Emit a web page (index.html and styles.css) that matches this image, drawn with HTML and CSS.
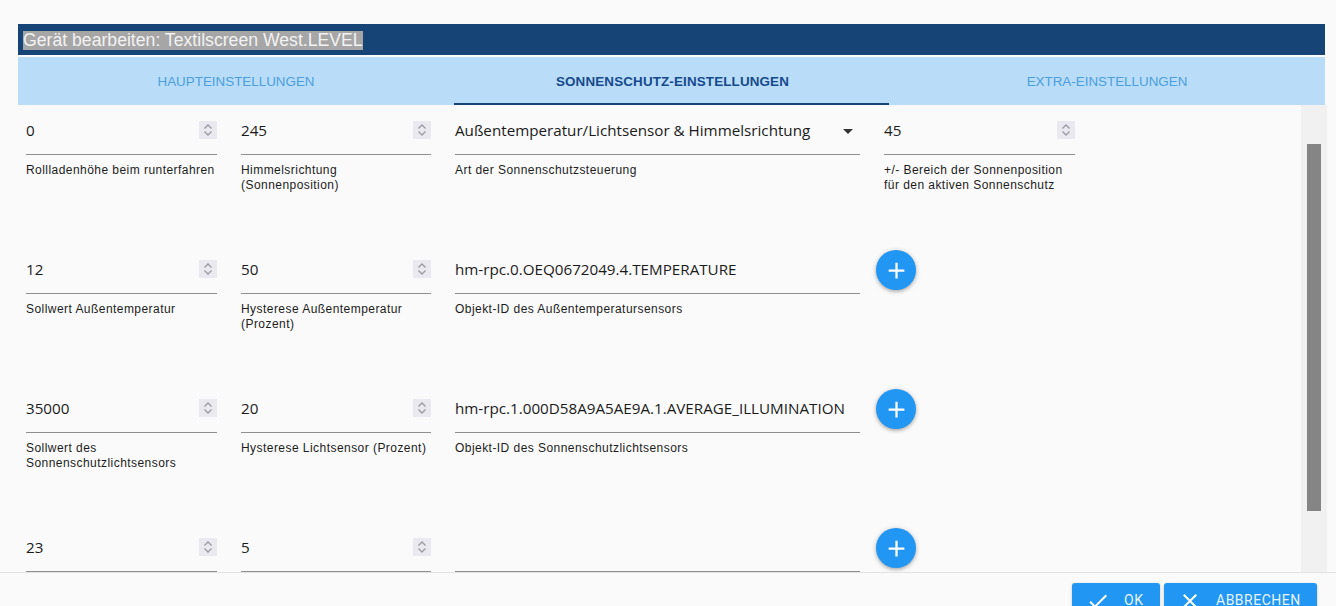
FILE: index.html
```html
<!DOCTYPE html>
<html lang="de">
<head>
<meta charset="utf-8">
<title>Gerät bearbeiten</title>
<link rel="stylesheet" href="styles.css">
</head>
<body>
<svg class="defs" width="0" height="0" aria-hidden="true">
  <symbol id="spin" viewBox="0 0 18 18">
    <rect width="18" height="18" fill="#e9e9ef"/>
    <path d="M5.500 7.500 9 4l3.500 3.500M5.500 10.500 9 14l3.500-3.500" fill="none" stroke="#9a9aa2" stroke-width="1.300"/>
  </symbol>
  <symbol id="plus" viewBox="0 0 24 24">
    <path d="M19 13h-6v6h-2v-6H5v-2h6V5h2v6h6v2z" fill="#fff"/>
  </symbol>
</svg>
<main class="dialog">
  <h1 class="title"><span class="title-sel">Gerät bearbeiten: Textilscreen West.LEVEL</span></h1>
  <nav class="tabs">
    <div class="tab">HAUPTEINSTELLUNGEN</div>
    <div class="tab tab-active">SONNENSCHUTZ-EINSTELLUNGEN</div>
    <div class="tab">EXTRA-EINSTELLUNGEN</div>
  </nav>
  <div class="content">
    <div class="form">
      <div class="row">
        <div class="field">
          <div class="input"><span class="value">0</span><svg class="spin"><use href="#spin"/></svg></div>
          <div class="label">Rollladenhöhe beim runterfahren</div>
        </div>
        <div class="field">
          <div class="input"><span class="value">245</span><svg class="spin"><use href="#spin"/></svg></div>
          <div class="label">Himmelsrichtung (Sonnenposition)</div>
        </div>
        <div class="field">
          <div class="input"><span class="value">Außentemperatur/Lichtsensor &amp; Himmelsrichtung</span><span class="caret"></span></div>
          <div class="label">Art der Sonnenschutzsteuerung</div>
        </div>
        <div class="field">
          <div class="input"><span class="value">45</span><svg class="spin"><use href="#spin"/></svg></div>
          <div class="label">+/- Bereich der Sonnenposition für den aktiven Sonnenschutz</div>
        </div>
      </div>
      <div class="row">
        <div class="field">
          <div class="input"><span class="value">12</span><svg class="spin"><use href="#spin"/></svg></div>
          <div class="label">Sollwert Außentemperatur</div>
        </div>
        <div class="field">
          <div class="input"><span class="value">50</span><svg class="spin"><use href="#spin"/></svg></div>
          <div class="label">Hysterese Außentemperatur (Prozent)</div>
        </div>
        <div class="field">
          <div class="input"><span class="value">hm-rpc.0.OEQ0672049.4.TEMPERATURE</span></div>
          <div class="label">Objekt-ID des Außentemperatursensors</div>
        </div>
        <div class="fab"><svg class="fab-icon"><use href="#plus"/></svg></div>
      </div>
      <div class="row">
        <div class="field">
          <div class="input"><span class="value">35000</span><svg class="spin"><use href="#spin"/></svg></div>
          <div class="label">Sollwert des Sonnenschutzlichtsensors</div>
        </div>
        <div class="field">
          <div class="input"><span class="value">20</span><svg class="spin"><use href="#spin"/></svg></div>
          <div class="label">Hysterese Lichtsensor (Prozent)</div>
        </div>
        <div class="field">
          <div class="input"><span class="value">hm-rpc.1.000D58A9A5AE9A.1.AVERAGE_ILLUMINATION</span></div>
          <div class="label">Objekt-ID des Sonnenschutzlichtsensors</div>
        </div>
        <div class="fab"><svg class="fab-icon"><use href="#plus"/></svg></div>
      </div>
      <div class="row">
        <div class="field">
          <div class="input"><span class="value">23</span><svg class="spin"><use href="#spin"/></svg></div>
        </div>
        <div class="field">
          <div class="input"><span class="value">5</span><svg class="spin"><use href="#spin"/></svg></div>
        </div>
        <div class="field">
          <div class="input"></div>
        </div>
        <div class="fab"><svg class="fab-icon"><use href="#plus"/></svg></div>
      </div>
    </div>
    <div class="scrollbar"><div class="thumb"></div></div>
  </div>
  <footer class="footer">
    <div class="btn">
      <svg class="btn-icon" viewBox="0 0 24 24"><path d="M9 16.170 4.830 12l-1.420 1.410L9 19 21 7l-1.410-1.410z" fill="#fff"/></svg>
      <span class="btn-text">OK</span>
    </div>
    <div class="btn">
      <svg class="btn-icon" viewBox="0 0 24 24"><path d="M19 6.410 17.590 5 12 10.590 6.410 5 5 6.410 10.590 12 5 17.590 6.410 19 12 13.410 17.590 19 19 17.590 13.410 12z" fill="#fff"/></svg>
      <span class="btn-text">ABBRECHEN</span>
    </div>
  </footer>
</main>
</body>
</html>
```

FILE: styles.css
```css
* { box-sizing: border-box; }
html, body { margin: 0; height: 100%; overflow: hidden; }
body { background: #fafafa; color: #111; font-family: "Liberation Sans", Arial, sans-serif; }
.defs { display: block; height: 0; }
.dialog { height: 606px; display: flex; flex-direction: column; padding-top: 24px; overflow: hidden; }

.title { margin: 0 11px 0 18px; height: 31px; background: #174476; padding: 7px 0 0 5px; font-size: 17.65px; line-height: 19px; font-weight: 400; color: #fff; flex: none; }
.title-sel { display: inline-block; background: #a6a6a6; color: #f2f2f2; height: 19px; }

.tabs { flex: none; margin: 2px 11px 0 18px; height: 48px; background: #b9dcf9; display: grid; grid-template-columns: 436px 435px 436px; }
.tab { display: flex; align-items: center; justify-content: center; font-size: 13.4px; color: #4b9fdc; }
.tab-active { color: #174a8c; font-weight: 700; border-bottom: 2px solid #174476; padding-top: 2px; padding-left: 2px; letter-spacing: 0.15px; }

.content { flex: none; height: 467px; margin-left: 18px; margin-right: 9px; display: flex; overflow: hidden; }
.form { flex: 1; padding-left: 8px; }
.row { height: 139px; display: grid; grid-template-columns: 191px 190px 405px 191px; column-gap: 24px; align-items: start; }
.input { height: 50px; display: flex; align-items: flex-start; justify-content: space-between; border-bottom: 1px solid #8f8f8f; font-family: "Open Sans", "Noto Sans", sans-serif; font-size: 15.2px; line-height: 22px; color: #1a1a1a; padding-top: 14px; white-space: nowrap; }
.spin { width: 18px; height: 18px; margin-top: 2px; flex: none; }
.caret { width: 0; height: 0; border-left: 5px solid transparent; border-right: 5px solid transparent; border-top: 5px solid #333; margin: 10px 7px 0 0; }
.label { margin-top: 8px; font-size: 12px; line-height: 15px; color: #1c1c1c; letter-spacing: 0.45px; }
.fab { width: 40px; height: 40px; margin: 6px 0 0 -8px; border-radius: 50%; background: #2196f3; box-shadow: 0 1px 5px rgba(0,0,0,.25), 0 2px 3px rgba(0,0,0,.12); display: flex; align-items: center; justify-content: center; }
.fab-icon { width: 27px; height: 27px; }

.scrollbar { flex: none; width: 26px; background: #f1f1f1; padding: 39px 6px 0 6px; }
.thumb { height: 367px; width: 14px; background: #858585; }

.footer { flex: none; height: 40px; border-top: 1px solid #e2e2e2; display: flex; justify-content: flex-end; gap: 4px; padding: 10px 19px 0 0; }
.btn { height: 36px; background: #2196f3; color: #e8f4fe; border-radius: 3px 3px 0 0; display: flex; align-items: flex-start; font-family: Roboto, sans-serif; font-size: 14px; line-height: 18px; letter-spacing: 0.5px; padding-left: 14px; gap: 14px; box-shadow: 0 1px 3px rgba(0,0,0,.2); }
.btn:first-child { width: 88px; }
.btn:last-child { width: 153px; }
.btn-icon { width: 24px; height: 24px; flex: none; margin-top: 6px; }
.btn-text { margin-top: 8px; }
```
